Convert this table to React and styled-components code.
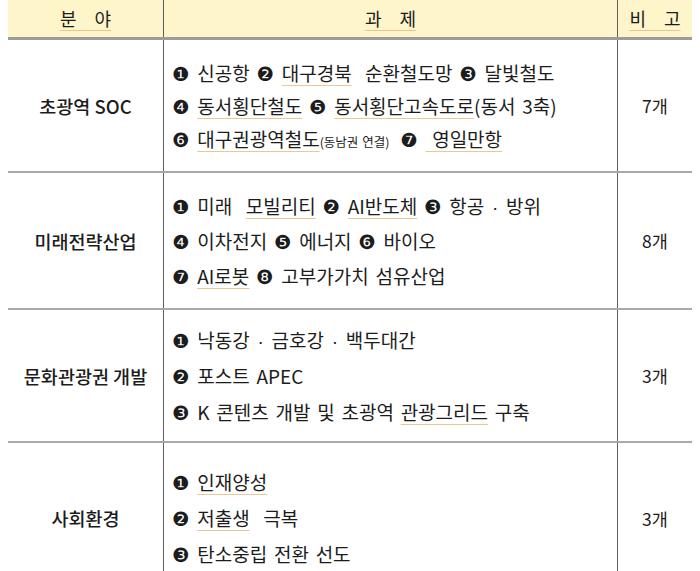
import React from 'react';
import styled, { createGlobalStyle } from 'styled-components';

const GlobalStyle = createGlobalStyle`
  body {
    margin: 0;
    background: #fff;
    font-family: "Noto Sans CJK KR", "Noto Sans", sans-serif;
    color: #1c1c1c;
  }
`;

const Table = styled.div`
  margin-left: 8px;
  width: 684px;
`;

const Row = styled.div`
  display: grid;
  grid-template-columns: 156px 454px 74px;
  height: ${(p) => p.$h}px;
  border-bottom: ${(p) => (p.$head ? '3px solid #9c9c9c' : '2px solid #a9a9a9')};
  background: ${(p) => (p.$head ? '#fff5cb' : '#fff')};
`;

const Cell = styled.div`
  box-sizing: border-box;
  display: flex;
  flex-direction: column;
  justify-content: center;
  align-items: ${(p) => (p.$left ? 'flex-start' : 'center')};
  padding-left: ${(p) => (p.$left ? '8px' : '0')};
  border-right: ${(p) => (p.$last ? 'none' : '1px solid #5e5e5e')};
  font-size: ${(p) => (p.$cat ? '18.5px' : '17.5px')};
  font-weight: ${(p) => (p.$cat ? 500 : 400)};
  white-space: nowrap;
`;

const HeadText = styled.span`
  font-size: 18px;
  word-spacing: 14px;
  text-decoration: underline;
  text-decoration-color: #e3c894;
  text-underline-offset: 4px;
  margin-top: -2px;
`;

const Line = styled.div`
  height: ${(p) => p.$lh}px;
  line-height: ${(p) => p.$lh}px;
  font-size: 19px;
  word-spacing: 2.5px;
`;

const Num = styled.span`
  font-family: "DejaVu Sans", sans-serif;
  font-size: 19.5px;
  margin-right: 1px;
`;

const Mark = styled.span`
  text-decoration: underline;
  text-decoration-color: #e6c994;
  text-decoration-thickness: 1px;
  text-underline-offset: 4px;
`;

const Dot = styled.span`
  font-family: "Liberation Sans", sans-serif;
  padding: 0 1px;
`;

const Small = styled.span`
  font-size: 12.5px;
  word-spacing: 1px;
  margin-right: 4px;
`;

const rows = [
  {
    h: 131,
    lh: 33,
    cat: '초광역 SOC',
    count: '7개',
    lines: [
      <><Num>❶</Num> 신공항 <Num>❷</Num> <Mark>대구경북</Mark>&nbsp; 순환철도망 <Num>❸</Num> 달빛철도</>,
      <><Num>❹</Num> <Mark>동서횡단철도</Mark> <Num>❺</Num> <Mark>동서횡단고속도로</Mark>(동서 3축)</>,
      <><Num>❻</Num> <Mark>대구권광역철도</Mark><Small>(동남권 연결)</Small> <Num>❼</Num> <Mark>&nbsp;영일만항</Mark></>,
    ],
  },
  {
    h: 135,
    lh: 35,
    cat: '미래전략산업',
    count: '8개',
    lines: [
      <><Num>❶</Num> 미래&nbsp; <Mark>모빌리티</Mark> <Num>❷</Num> <Mark>AI반도체</Mark> <Num>❸</Num> 항공 <Dot>·</Dot> 방위</>,
      <><Num>❹</Num> 이차전지 <Num>❺</Num> 에너지 <Num>❻</Num> 바이오</>,
      <><Num>❼</Num> <Mark>AI로봇</Mark> <Num>❽</Num> 고부가가치 섬유산업</>,
    ],
  },
  {
    h: 131,
    lh: 36,
    cat: '문화관광권 개발',
    count: '3개',
    lines: [
      <><Num>❶</Num> 낙동강 <Dot>·</Dot> 금호강 <Dot>·</Dot> 백두대간</>,
      <><Num>❷</Num> 포스트 APEC</>,
      <><Num>❸</Num> K 콘텐츠 개발 및 초광역 <Mark>관광그리드</Mark> 구축</>,
    ],
  },
  {
    h: 150,
    lh: 36,
    cat: '사회환경',
    count: '3개',
    lines: [
      <><Num>❶</Num> <Mark>인재양성</Mark></>,
      <><Num>❷</Num> <Mark>저출생</Mark>&nbsp; 극복</>,
      <><Num>❸</Num> 탄소중립 전환 선도</>,
    ],
  },
];

export default function App() {
  return (
    <>
      <GlobalStyle />
      <Table>
        <Row $head $h={37}>
          <Cell><HeadText>분 야</HeadText></Cell>
          <Cell><HeadText>과 제</HeadText></Cell>
          <Cell $last><HeadText>비 고</HeadText></Cell>
        </Row>
        {rows.map((r) => (
          <Row key={r.cat} $h={r.h}>
            <Cell $cat>{r.cat}</Cell>
            <Cell $left>
              {r.lines.map((l, i) => (
                <Line key={i} $lh={r.lh}>{l}</Line>
              ))}
            </Cell>
            <Cell $last>{r.count}</Cell>
          </Row>
        ))}
      </Table>
    </>
  );
}
